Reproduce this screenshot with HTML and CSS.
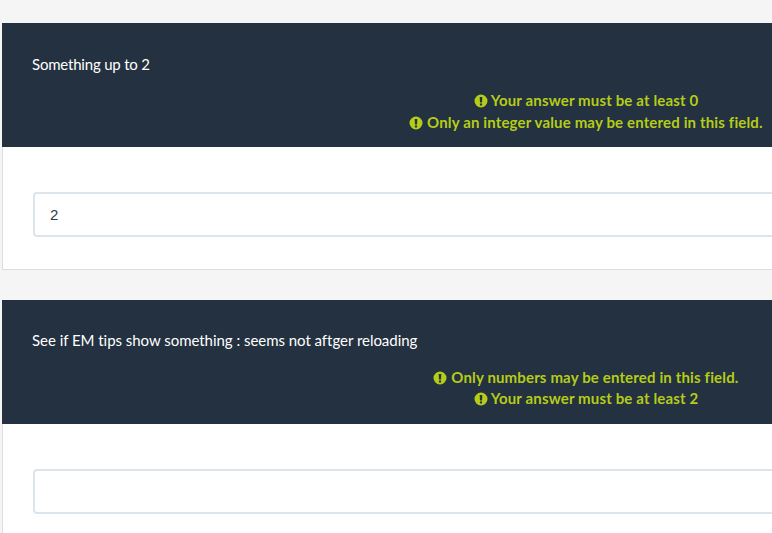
FILE: index.html
```html
<!DOCTYPE html>
<html lang="en">
<head>
<meta charset="utf-8">
<title>Survey</title>
<link rel="stylesheet" href="styles.css">
</head>
<body>
<main class="page">
  <section class="card">
    <header class="card-head">
      <div class="question question-short">Something up to 2</div>
      <div class="tips">
        <div class="tip"><svg class="tip-icon" viewBox="0 0 14 14"><path fill-rule="evenodd" d="M7 .5a6.5 6.5 0 1 1 0 13a6.5 6.5 0 0 1 0-13zM5.7 2.9l.25 5.6h2.1l.25-5.6zM5.9 9.4v2h2.2v-2z"/></svg> Your answer must be at least 0</div>
        <div class="tip"><svg class="tip-icon" viewBox="0 0 14 14"><path fill-rule="evenodd" d="M7 .5a6.5 6.5 0 1 1 0 13a6.5 6.5 0 0 1 0-13zM5.7 2.9l.25 5.6h2.1l.25-5.6zM5.9 9.4v2h2.2v-2z"/></svg> Only an integer value may be entered in this field.</div>
      </div>
    </header>
    <div class="card-body"><input class="field" type="text" value="2" aria-label="Something up to 2"></div>
  </section>
  <section class="card">
    <header class="card-head">
      <div class="question">See if EM tips show something : seems not aftger reloading</div>
      <div class="tips">
        <div class="tip"><svg class="tip-icon" viewBox="0 0 14 14"><path fill-rule="evenodd" d="M7 .5a6.5 6.5 0 1 1 0 13a6.5 6.5 0 0 1 0-13zM5.7 2.9l.25 5.6h2.1l.25-5.6zM5.9 9.4v2h2.2v-2z"/></svg> Only numbers may be entered in this field.</div>
        <div class="tip"><svg class="tip-icon" viewBox="0 0 14 14"><path fill-rule="evenodd" d="M7 .5a6.5 6.5 0 1 1 0 13a6.5 6.5 0 0 1 0-13zM5.7 2.9l.25 5.6h2.1l.25-5.6zM5.9 9.4v2h2.2v-2z"/></svg> Your answer must be at least 2</div>
      </div>
    </header>
    <div class="card-body"><input class="field" type="text" aria-label="See if EM tips show something"></div>
  </section>
</main>
</body>
</html>
```
FILE: styles.css
```css
html, body {
  margin: 0;
  height: 100%;
  overflow: hidden;
  background: #f5f5f5;
}
body {
  font-family: Lato, sans-serif;
  font-size: 15px;
  line-height: 1.42857;
  color: #233140;
}
.page {
  width: 1168px;
  padding: 23.1px 0 0 2px;
  display: flex;
  flex-direction: column;
  gap: 30px;
}
.card {
  background: #fff;
  border: 1px solid #ddd;
  border-top: 0;
}
.card-head {
  margin: 0 -1px;
  padding: 30.45px 30px 14px;
  background: #233140;
  color: #fff;
}
.question {
  margin-bottom: 14.55px;
  height: 22px;
  letter-spacing: -0.035px;
}
.question-short {
  letter-spacing: -0.2px;
}
.tips {
  text-align: center;
  color: #b5cc18;
  font-weight: 700;
  letter-spacing: 0.15px;
}
.tip-icon {
  width: 14px;
  height: 14px;
  fill: currentColor;
  vertical-align: -2px;
}
.card-body {
  padding: 45px 30px 32px;
}
.field {
  display: block;
  box-sizing: border-box;
  width: 100%;
  height: 45px;
  padding: 6px 15px;
  border: 2px solid #dce4ec;
  border-radius: 4px;
  background: #fff;
  color: #2c3e50;
  font: 15px "Liberation Sans", sans-serif;
  outline: 0;
}
```
